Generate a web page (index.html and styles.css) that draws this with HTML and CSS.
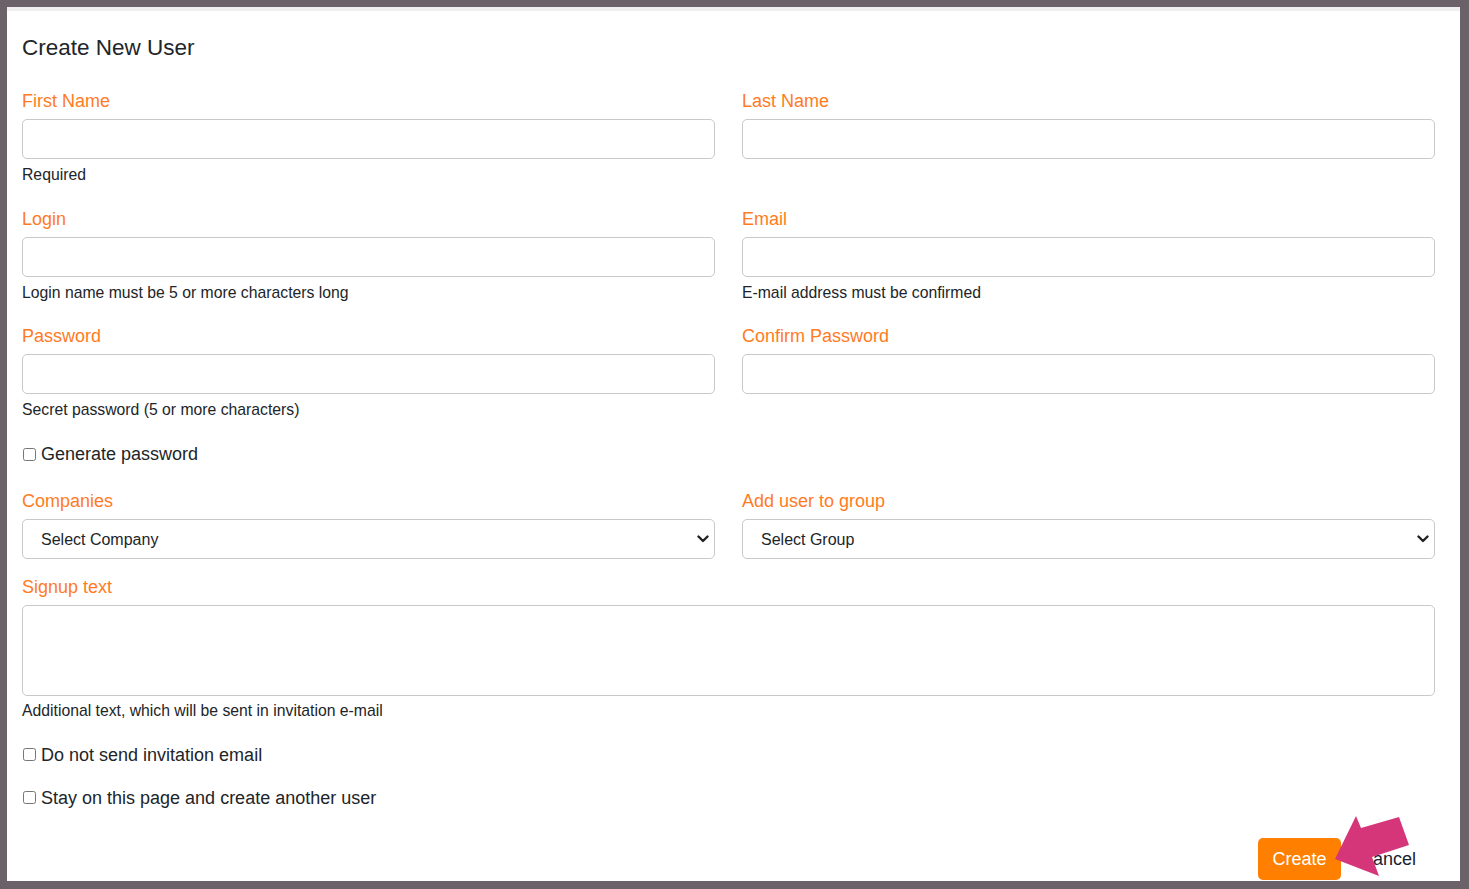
FILE: index.html
```html
<!DOCTYPE html>
<html lang="en">
<head>
<meta charset="utf-8">
<title>Create New User</title>
<link rel="stylesheet" href="styles.css">
</head>
<body>
<div class="frame">
  <div class="content">
    <h1 class="title">Create New User</h1>
    <form class="form">
      <div class="grid">
        <div class="group">
          <label class="label">First Name</label>
          <input class="control" type="text">
          <div class="help">Required</div>
        </div>
        <div class="group">
          <label class="label">Last Name</label>
          <input class="control" type="text">
        </div>
        <div class="group">
          <label class="label">Login</label>
          <input class="control" type="text">
          <div class="help">Login name must be 5 or more characters long</div>
        </div>
        <div class="group">
          <label class="label">Email</label>
          <input class="control" type="text">
          <div class="help">E-mail address must be confirmed</div>
        </div>
        <div class="group">
          <label class="label">Password</label>
          <input class="control" type="password">
          <div class="help">Secret password (5 or more characters)</div>
        </div>
        <div class="group">
          <label class="label">Confirm Password</label>
          <input class="control" type="password">
        </div>
      </div>

      <label class="check check-gen"><input type="checkbox">Generate password</label>

      <div class="grid grid-selects">
        <div class="group">
          <label class="label">Companies</label>
          <div class="select-wrap">
            <select class="control select"><option>Select Company</option></select>
            <svg class="chev" width="12" height="8" viewBox="0 0 12 8"><path d="M1.5 1.5 L6 6 L10.5 1.5" fill="none" stroke="#222" stroke-width="2.4" stroke-linecap="round" stroke-linejoin="round"/></svg>
          </div>
        </div>
        <div class="group">
          <label class="label">Add user to group</label>
          <div class="select-wrap">
            <select class="control select"><option>Select Group</option></select>
            <svg class="chev" width="12" height="8" viewBox="0 0 12 8"><path d="M1.5 1.5 L6 6 L10.5 1.5" fill="none" stroke="#222" stroke-width="2.4" stroke-linecap="round" stroke-linejoin="round"/></svg>
          </div>
        </div>
      </div>

      <div class="group full">
        <label class="label">Signup text</label>
        <textarea class="control area"></textarea>
        <div class="help help-full">Additional text, which will be sent in invitation e-mail</div>
      </div>

      <label class="check check-a"><input type="checkbox">Do not send invitation email</label>
      <label class="check check-b"><input type="checkbox">Stay on this page and create another user</label>

      <div class="actions">
        <button type="button" class="btn-create">Create</button>
        <a class="btn-cancel">Cancel</a>
        <svg class="arrow" width="90" height="70" viewBox="1325 812 90 70"><polygon points="1335,859 1356,816 1361,828 1399,817 1409,845 1372,857 1379,876" fill="#d5367a"/></svg>
      </div>
    </form>
  </div>
</div>
</body>
</html>
```

FILE: styles.css
```css
html, body {
  margin: 0;
  padding: 0;
  height: 100%;
  overflow: hidden;
}
body {
  background: #6b6168;
  font-family: "Liberation Sans", Arial, sans-serif;
  color: #212529;
}
.frame {
  margin: 7px 9px 0 7px;
  height: 870px;
  background: #ffffff;
  border-top: 4px solid #efefef;
}
.content {
  padding: 0 25px 0 15px;
}
.title {
  margin: 23px 0 0 0;
  font-size: 22.5px;
  line-height: 27px;
  font-weight: normal;
  color: #212529;
}
.form {
  margin-top: 29px;
}
.grid {
  display: grid;
  grid-template-columns: 1fr 1fr;
  column-gap: 27px;
}
.group {
  display: flex;
  flex-direction: column;
  margin-bottom: 22.5px;
}
.label {
  display: block;
  font-size: 18px;
  line-height: 22px;
  color: #ff7b1f;
  margin-bottom: 7px;
}
.control {
  box-sizing: border-box;
  height: 40px;
  width: 100%;
  border: 1px solid #c9c9c9;
  border-radius: 5px;
  background: #fff;
  font-family: "Liberation Sans", Arial, sans-serif;
  font-size: 16px;
  color: #212529;
  margin: 0;
  padding: 0 12px;
  outline: none;
}
.help {
  margin-top: 6px;
  font-size: 15.75px;
  line-height: 20px;
  color: #212529;
}
.help-full {
  margin-top: 5px;
}
.check {
  display: flex;
  align-items: center;
  font-size: 18px;
  line-height: 22px;
  color: #212529;
}
.check input {
  width: 13px;
  height: 13px;
  margin: 0 5px 0 1px;
}
.check-gen {
  margin-top: 0.5px;
  margin-bottom: 25px;
}
.grid-selects .group {
  margin-bottom: 17px;
}
.select-wrap {
  position: relative;
}
.select {
  appearance: none;
  -webkit-appearance: none;
  padding-left: 18px;
}
.chev {
  position: absolute;
  right: 6px;
  top: 16px;
  pointer-events: none;
}
.area {
  height: 91px;
  resize: none;
}
.full {
  margin-bottom: 22.5px;
}
.check-a {
  margin-bottom: 21px;
}
.check-b {
  margin-bottom: 29.5px;
}
.actions {
  position: relative;
  display: flex;
  justify-content: flex-end;
  align-items: center;
  padding-right: 19px;
}
.btn-create {
  height: 42px;
  width: 83px;
  border: none;
  border-radius: 5px;
  background: #ff7f00;
  color: #fff;
  font-family: "Liberation Sans", Arial, sans-serif;
  font-size: 18px;
  padding: 0;
}
.btn-cancel {
  margin-left: 19px;
  font-size: 18px;
  color: #1c2230;
}
.arrow {
  position: absolute;
  right: 20px;
  top: -26px;
}
```
